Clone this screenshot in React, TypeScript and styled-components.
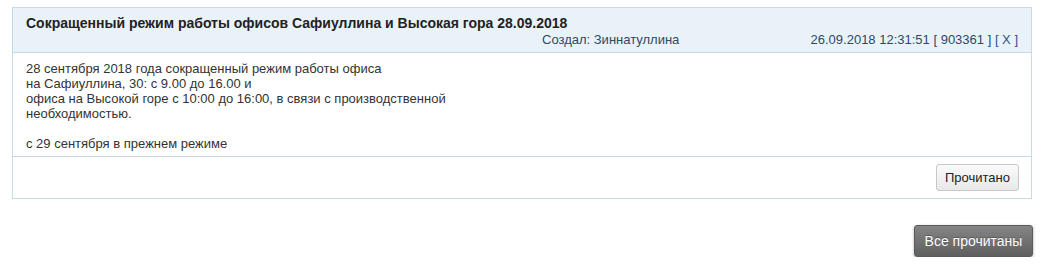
import React from "react";
import styled, { createGlobalStyle } from "styled-components";

const GlobalStyle = createGlobalStyle`
	html, body {
		margin: 0;
		padding: 0;
		background: #fff;
	}
	body {
		font-family: "Liberation Sans", Arial, sans-serif;
		font-size: 13px;
		color: #333;
	}
`;

const Page = styled.div`
	padding: 7px 23px 0 12px;
	display: flex;
	flex-direction: column;
`;

const Panel = styled.div`
	border: 1px solid #c6dbe8;
	background: #fff;
`;

const PanelHeader = styled.div`
	background: #eaf2f9;
	border-bottom: 1px solid #c6dbe8;
	padding: 7px 13px 5px 13px;
	height: 32px;
`;

const Title = styled.div`
	font-size: 14px;
	font-weight: bold;
	color: #222;
	line-height: 17px;
`;

const MetaRow = styled.div`
	display: grid;
	grid-template-columns: 516px 1fr auto;
	line-height: 15px;
	font-size: 13px;
	color: #2b4a68;
`;

const Creator = styled.span`
	grid-column: 2;
`;

const Stamp = styled.span`
	grid-column: 3;
`;

const Close = styled.a`
	color: #2b5585;
	text-decoration: none;
	cursor: pointer;
`;

const PanelBody = styled.div`
	padding: 8px 13px 5px 13px;
	line-height: 15px;
	font-size: 13px;
	color: #333;
	border-bottom: 1px solid #c6dbe8;
`;

const PanelFooter = styled.div`
	display: flex;
	justify-content: flex-end;
	padding: 7px 12px 7px 12px;
`;

const LightButton = styled.button`
	font-family: "Liberation Sans", Arial, sans-serif;
	font-size: 13px;
	color: #222;
	height: 27px;
	padding: 0 8px;
	background: linear-gradient(#fafafa, #e9e9e9);
	border: 1px solid #c8c8c8;
	border-radius: 3px;
	cursor: pointer;
`;

const Actions = styled.div`
	display: flex;
	justify-content: flex-end;
	margin-top: 26px;
	margin-right: -1px;
`;

const DarkButton = styled.button`
	font-family: "Liberation Sans", Arial, sans-serif;
	font-size: 14px;
	color: #fff;
	height: 32px;
	width: 119px;
	background: linear-gradient(#858585, #5f5f5f);
	border: 1px solid #5a5a5a;
	border-radius: 3px;
	box-shadow: 0 1px 3px rgba(0, 0, 0, 0.35);
	text-shadow: 0 -1px 0 rgba(0, 0, 0, 0.3);
	cursor: pointer;
`;

export default function App() {
	return (
		<>
			<GlobalStyle />
			<Page>
				<Panel>
					<PanelHeader>
						<Title>Сокращенный режим работы офисов Сафиуллина и Высокая гора 28.09.2018</Title>
						<MetaRow>
							<Creator>Создал: Зиннатуллина</Creator>
							<Stamp>
								26.09.2018 12:31:51 [ 903361 ] <Close>[ X ]</Close>
							</Stamp>
						</MetaRow>
					</PanelHeader>
					<PanelBody>
						28 сентября 2018 года сокращенный режим работы офиса
						<br />
						на Сафиуллина, 30: с 9.00 до 16.00 и
						<br />
						офиса на Высокой горе с 10:00 до 16:00, в связи с производственной
						<br />
						необходимостью.
						<br />
						<br />
						с 29 сентября в прежнем режиме
					</PanelBody>
					<PanelFooter>
						<LightButton>Прочитано</LightButton>
					</PanelFooter>
				</Panel>
				<Actions>
					<DarkButton>Все прочитаны</DarkButton>
				</Actions>
			</Page>
		</>
	);
}
